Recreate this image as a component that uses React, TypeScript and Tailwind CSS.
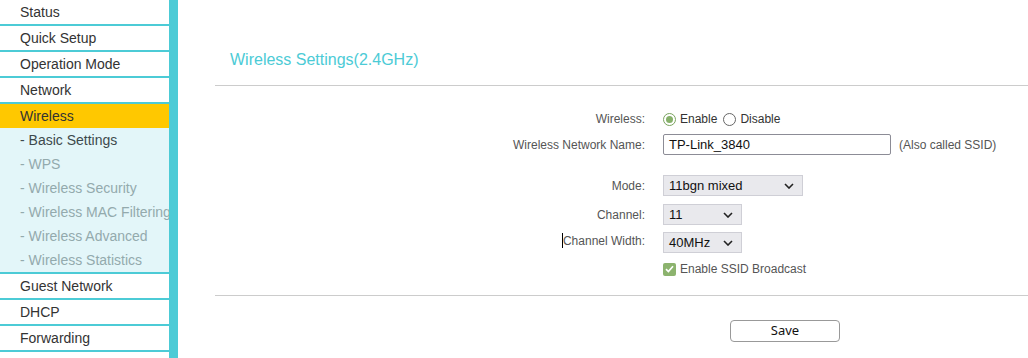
import React from 'react'

const mainItems = ['Status', 'Quick Setup', 'Operation Mode', 'Network']
const subItems = ['- WPS', '- Wireless Security', '- Wireless MAC Filtering', '- Wireless Advanced', '- Wireless Statistics']
const lowerItems = ['Guest Network', 'DHCP', 'Forwarding']

function Chevron() {
  return (
    <svg width="10" height="6" viewBox="0 0 10 6" className="shrink-0">
      <path d="M1 1l4 4 4-4" fill="none" stroke="#222" strokeWidth="1.6" />
    </svg>
  )
}

function Select({ value, width }: { value: string; width: string }) {
  return (
    <div className={`${width} h-[21px] flex items-center justify-between pl-[5px] pr-[8px] bg-[#e9e9ed] border border-[#cfcfd6] text-[13px] text-[#111]`}>
      <span>{value}</span>
      <Chevron />
    </div>
  )
}

function Row({ label, children, className = '' }: { label: React.ReactNode; children: React.ReactNode; className?: string }) {
  return (
    <div className={`flex items-center ${className}`}>
      <div className="w-[448px] text-right text-[12px] text-[#555] pr-[18px]">{label}</div>
      <div className="flex items-center">{children}</div>
    </div>
  )
}

export default function App() {
  return (
    <div className="flex w-[1028px] h-[358px] overflow-hidden bg-white" style={{ fontFamily: '"Liberation Sans", Arial, sans-serif' }}>
      <div className="w-[178px] shrink-0 border-r-[9px] border-[#4ccbd6] flex flex-col">
        {mainItems.map((t) => (
          <div key={t} className="h-[26px] shrink-0 border-b-2 border-[#4ccbd6] pl-5 flex items-center text-[14px] text-[#333]">{t}</div>
        ))}
        <div className="h-[24px] shrink-0 bg-[#ffc800] pl-5 flex items-center text-[14px] text-[#333]">Wireless</div>
        <div className="bg-[#e3f6f9] border-b-2 border-[#4ccbd6]">
          <div className="h-[24px] pl-5 flex items-center text-[14px] text-[#3d4a4d] whitespace-nowrap">- Basic Settings</div>
          {subItems.map((t) => (
            <div key={t} className="h-[24px] pl-5 flex items-center text-[14px] text-[#93aaad] whitespace-nowrap overflow-hidden">{t}</div>
          ))}
        </div>
        {lowerItems.map((t) => (
          <div key={t} className="h-[26px] shrink-0 border-b-2 border-[#4ccbd6] pl-5 flex items-center text-[14px] text-[#333]">{t}</div>
        ))}
      </div>

      <div className="flex-1 pl-[37px] flex flex-col">
        <div className="pt-[48px] pl-[15px] h-[85px] text-[16px] text-[#4ccbd6]">Wireless Settings(2.4GHz)</div>
        <div className="h-px bg-[#cccccc]" />

        <div className="flex flex-col pt-[24px]">
          <Row label="Wireless:" className="h-[18px]">
            <span className="w-[13px] h-[13px] rounded-full border border-[#7aa35f] flex items-center justify-center">
              <span className="w-[7px] h-[7px] rounded-full bg-[#86b06a]" />
            </span>
            <span className="ml-[4px] text-[12px] text-[#333]">Enable</span>
            <span className="ml-[6px] w-[13px] h-[13px] rounded-full border border-[#666]" />
            <span className="ml-[4px] text-[12px] text-[#333]">Disable</span>
          </Row>
          <Row label="Wireless Network Name:" className="mt-[6px] h-[21px]">
            <div className="w-[228px] h-[21px] border border-[#8c8c96] rounded-[2px] flex items-center pl-[5px] text-[13px] text-[#111]">TP-Link_3840</div>
            <span className="ml-[8px] text-[12px] text-[#555]">(Also called SSID)</span>
          </Row>
          <Row label="Mode:" className="mt-[20px] h-[21px]">
            <Select value="11bgn mixed" width="w-[140px]" />
          </Row>
          <Row label="Channel:" className="mt-[8px] h-[21px]">
            <Select value="11" width="w-[79px]" />
          </Row>
          <Row
            label={
              <span className="inline-flex items-center">
                <span className="inline-block w-px h-[15px] bg-black" />
                Channel Width:
              </span>
            }
            className="mt-[7px] h-[21px]"
          >
            <Select value="40MHz" width="w-[79px]" />
          </Row>
          <Row label="" className="mt-[8px] h-[16px]">
            <span className="w-[13px] h-[13px] rounded-[2px] bg-[#8cb36e] flex items-center justify-center">
              <svg width="9" height="8" viewBox="0 0 9 8">
                <path d="M1 4.2l2.4 2.3L8 1.3" fill="none" stroke="white" strokeWidth="1.7" />
              </svg>
            </span>
            <span className="ml-[4px] text-[12px] text-[#555]">Enable SSID Broadcast</span>
          </Row>
        </div>

        <div className="mt-[18px] h-px bg-[#cccccc]" />
        <div className="pt-[24px] pl-[515px]">
          <button
            className="w-[110px] h-[22px] border border-[#999] rounded-[4px] bg-white text-[13px] text-[#111] flex items-center justify-center"
            style={{ fontFamily: '"Noto Sans", "DejaVu Sans", sans-serif' }}
          >
            Save
          </button>
        </div>
      </div>
    </div>
  )
}
